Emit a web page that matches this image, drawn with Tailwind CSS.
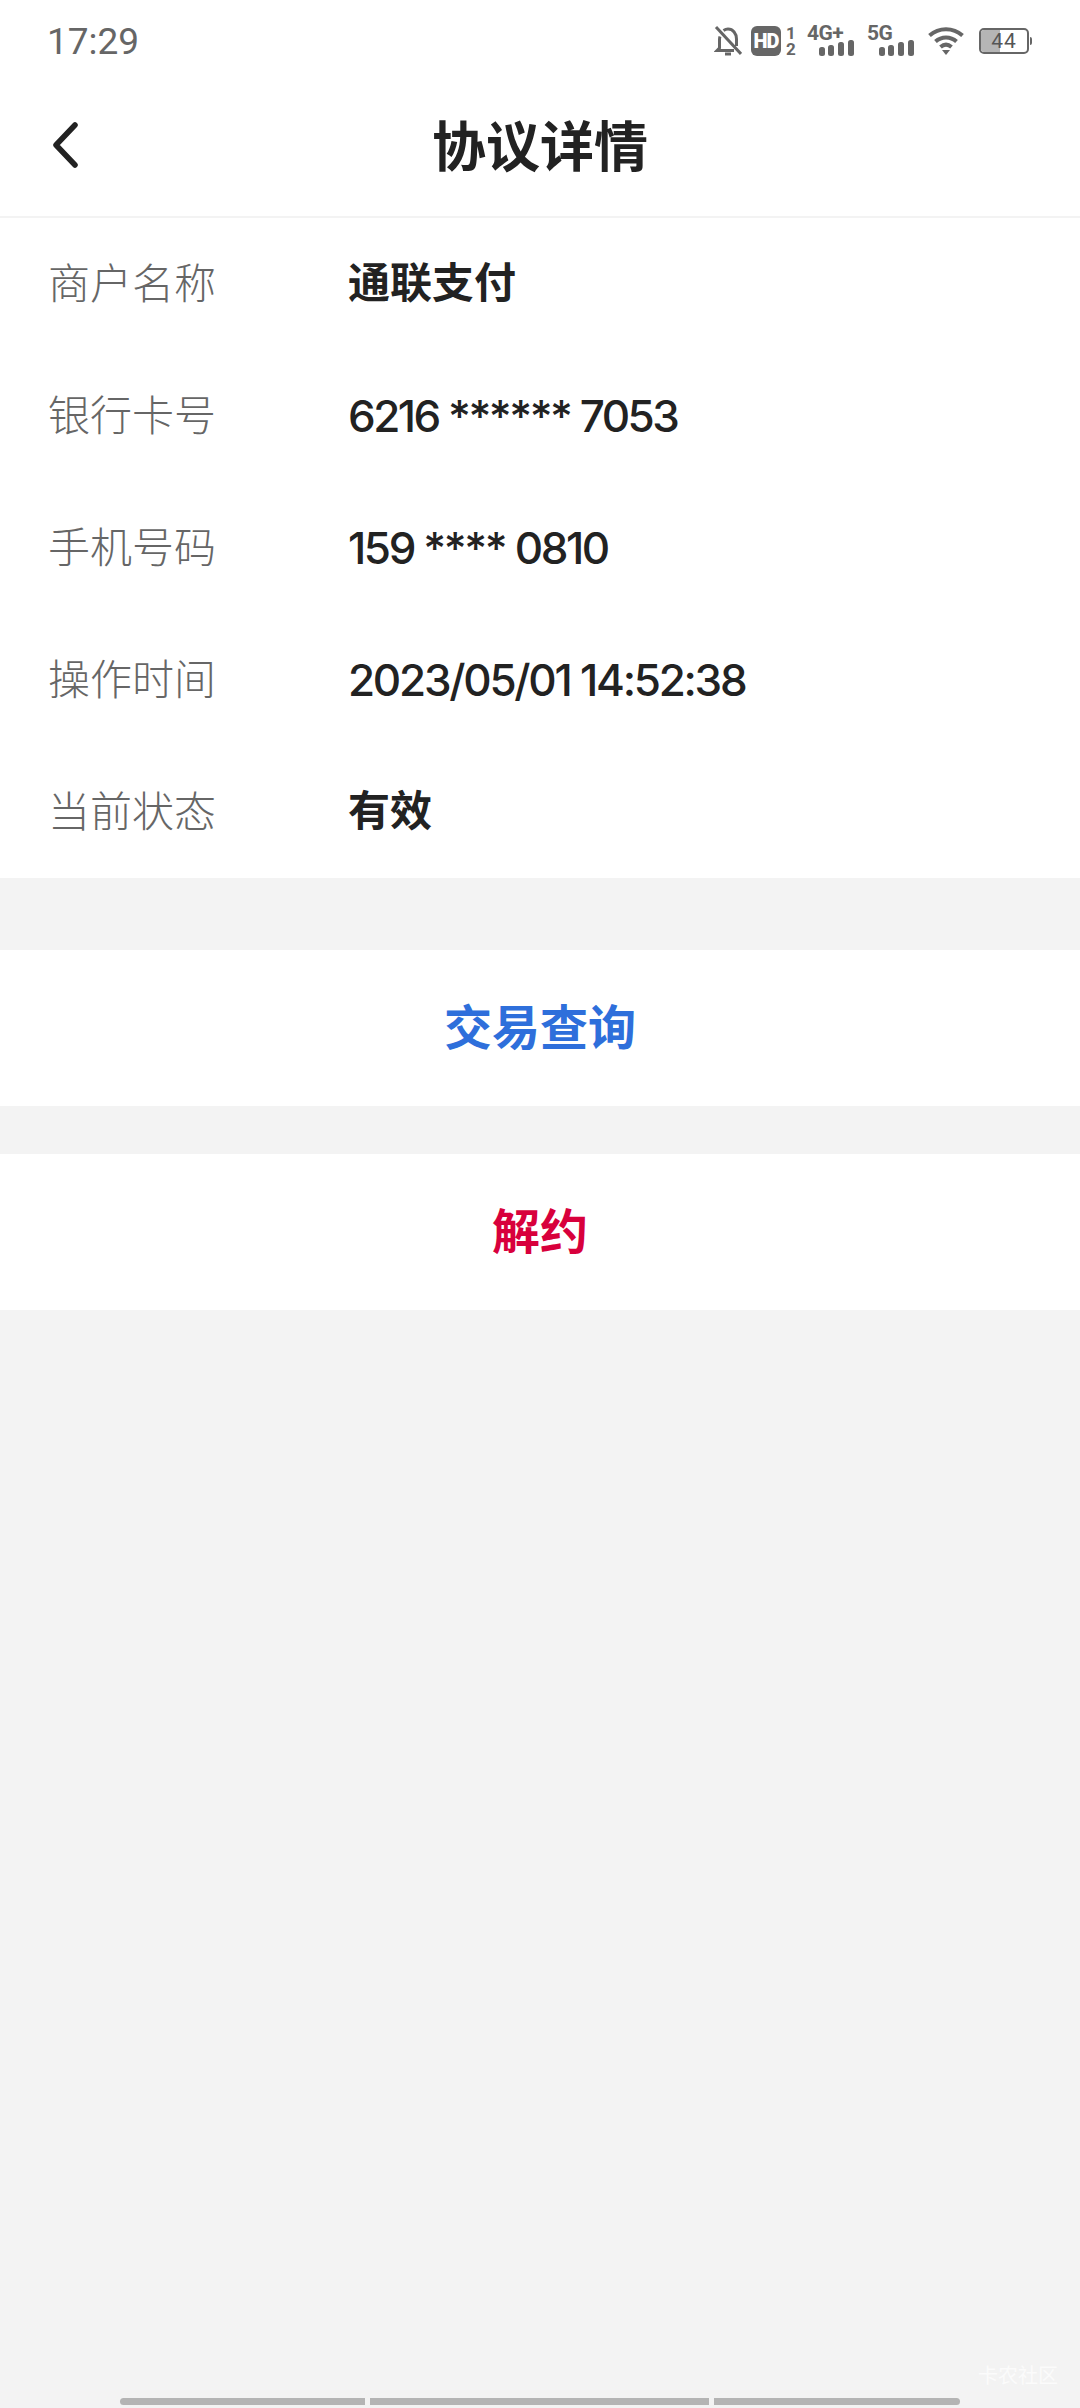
<!DOCTYPE html>
<html lang="zh-CN">
<head>
    <meta charset="UTF-8">
    <meta name="viewport" content="width=device-width, initial-scale=1.0">
    <title>协议详情</title>
    <script src="https://cdn.jsdelivr.net/npm/@tailwindcss/browser@4"></script>
</head>
<body class="bg-[#f3f3f3] font-['Roboto','Noto_Sans_CJK_SC',sans-serif]">
<div class="relative w-[1080px] h-[2408px] overflow-hidden flex flex-col">
    <!-- Status bar -->
    <div class="bg-white h-[82px] flex items-center justify-between pl-[47px] pr-[48px] text-[#666]">
        <span class="text-[37px] leading-none">17:29</span>
        <div class="flex items-center h-[30px]">
            <svg class="w-[28px] h-[32px]" viewBox="0 0 28 32" fill="none" stroke="#666" stroke-width="3">
                <path d="M6 11.500C5.700 12.500 5.500 13.500 5.500 14.500V23L3 25.500H20"/>
                <path d="M9.500 5.500C11 4.500 12.500 4 14 4c5 0 8.500 4.500 8.500 10v7"/>
                <path d="M11 29h6" stroke-width="3"/>
                <path d="M2 2l25 27"/>
            </svg>
            <div class="ml-[9px] w-[30px] h-[30px] rounded-[6px] bg-[#666] text-white text-[20px] font-black leading-[30px] text-center tracking-[-1px]">HD</div>
            <div class="ml-[4px] w-[12px] flex flex-col items-center text-[17px] font-bold leading-[16px]"><span>1</span><span>2</span></div>
            <div class="ml-[10px] relative w-[48px] h-[30px]">
                <span class="absolute left-0 top-[-4px] text-[21px] font-bold leading-[22px] tracking-[-0.500px]">4G+</span>
                <svg class="absolute left-[12px] bottom-0 w-[36px] h-[16px]" viewBox="0 0 36 16" fill="#666">
                    <rect x="0" y="7" width="6" height="9" rx="2.500"/><rect x="9" y="5" width="6" height="11" rx="2.500"/><rect x="19" y="2" width="6" height="14" rx="2.500"/><rect x="29" y="0" width="6" height="16" rx="2.500"/>
                </svg>
            </div>
            <div class="ml-[12px] relative w-[48px] h-[30px]">
                <span class="absolute left-0 top-[-4px] text-[21px] font-bold leading-[22px] tracking-[-0.500px]">5G</span>
                <svg class="absolute left-[12px] bottom-0 w-[36px] h-[16px]" viewBox="0 0 36 16" fill="#666">
                    <rect x="0" y="7" width="6" height="9" rx="2.500"/><rect x="9" y="5" width="6" height="11" rx="2.500"/><rect x="19" y="2" width="6" height="14" rx="2.500"/><rect x="29" y="0" width="6" height="16" rx="2.500"/>
                </svg>
            </div>
            <svg class="ml-[13px] w-[36px] h-[28px]" viewBox="0 0 36 28" fill="none" stroke="#666" stroke-width="4">
                <path d="M1.500 8.500C11 0 25 0 34.500 8.500"/>
                <path d="M7.500 14.500C13.500 9 22.500 9 28.500 14.500"/>
                <path d="M12.500 20C16 17 20 17 23.500 20"/>
                <path d="M14 23h8l-4 5z" fill="#666" stroke="none"/>
            </svg>
            <div class="ml-[15px] relative w-[50px] h-[26px] rounded-[5px] border-[2.500px] border-[#666] overflow-hidden">
                <div class="absolute left-0 top-0 bottom-0 w-[19px] bg-[#b5b5b5]"></div>
                <span class="absolute inset-0 flex items-center justify-center text-[21px] leading-none tracking-[1px] text-[#555]">44</span>
            </div>
            <div class="w-[2px] h-[8px] ml-[1px] rounded-r-sm bg-[#666]"></div>
        </div>
    </div>

    <!-- Nav bar -->
    <header class="relative bg-white h-[134px] flex items-center justify-center">
        <svg class="absolute left-[52px] top-[40px] w-[27px] h-[46px]" viewBox="0 0 27 46" fill="none" stroke="#222" stroke-width="5.500" stroke-linecap="round" stroke-linejoin="round">
            <path d="M23 3L4 23l19 20" />
        </svg>
        <h1 class="text-[54px] leading-none font-bold text-[#222]">协议详情</h1>
    </header>
    <div class="h-[3px] bg-[#f3f3f3]"></div>

    <!-- Agreement info -->
    <section class="bg-white text-[42px] mt-[-1px]">
        <div class="h-[132px] flex items-center pl-[48px]">
            <span class="w-[300px] text-[#666] font-light">商户名称</span>
            <span class="font-bold text-[#222] mt-[-2px]">通联支付</span>
        </div>
        <div class="h-[132px] flex items-center pl-[48px]">
            <span class="w-[300px] text-[#666] font-light">银行卡号</span>
            <span class="font-['Inter'] text-[44px] font-medium tracking-[-2.500px] text-[#222] mt-[-1px]">6216 ****** 7053</span>
        </div>
        <div class="h-[132px] flex items-center pl-[48px]">
            <span class="w-[300px] text-[#666] font-light">手机号码</span>
            <span class="font-['Inter'] text-[44px] font-medium tracking-[-2.400px] text-[#222] mt-[-1px]">159 **** 0810</span>
        </div>
        <div class="h-[132px] flex items-center pl-[48px]">
            <span class="w-[300px] text-[#666] font-light">操作时间</span>
            <span class="font-['Inter'] text-[44px] font-medium tracking-[-2.250px] text-[#222] mt-[-1px]">2023/05/01 14:52:38</span>
        </div>
        <div class="h-[132px] flex items-center pl-[48px]">
            <span class="w-[300px] text-[#666] font-light">当前状态</span>
            <span class="font-bold text-[#222] mt-[-2px]">有效</span>
        </div>
    </section>

    <!-- Actions -->
    <button class="mt-[72px] bg-white h-[156px] pt-[2px] text-[48px] font-bold text-[#2e6fdb]">交易查询</button>
    <button class="mt-[48px] bg-white h-[156px] pt-[2px] text-[48px] font-bold text-[#d8003c]">解约</button>

    <!-- Watermark -->
    <span class="absolute right-[22px] bottom-[22px] text-[20px] leading-none text-white/70">卡农社区</span>

    <!-- Gesture bar -->
    <div class="absolute left-[120px] bottom-[3px] w-[840px] h-[7px] flex gap-[5px]">
        <div class="w-[245px] rounded-l-full bg-[#b4b4b4]"></div>
        <div class="w-[339px] bg-[#b4b4b4]"></div>
        <div class="w-[246px] rounded-r-full bg-[#b4b4b4]"></div>
    </div>
</div>
</body>
</html>
